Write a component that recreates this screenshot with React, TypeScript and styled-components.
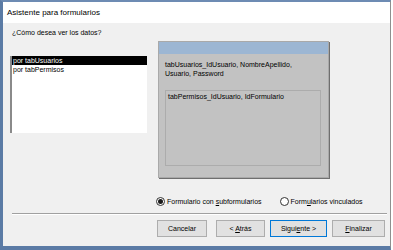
import styled, { createGlobalStyle } from "styled-components";

const GlobalStyle = createGlobalStyle`
  html, body {
    margin: 0;
    padding: 0;
    background: #ffffff;
  }
  body {
    font-family: "Liberation Sans", Arial, sans-serif;
    color: #000000;
  }
`;

const Window = styled.div`
  width: 391px;
  height: 250px;
  box-sizing: border-box;
  display: flex;
  flex-direction: column;
  border-top: 2px solid #6d8bb3;
  border-left: 3px solid #5b7ba5;
  border-bottom: 4px solid #5b7ba5;
  border-right: 1px solid #8f8f8f;
`;

const TitleBar = styled.div`
  height: 21px;
  display: flex;
  align-items: center;
  padding-left: 4px;
  background: #ffffff;
  font-size: 8px;
`;

const Body = styled.div`
  flex: 1;
  display: flex;
  flex-direction: column;
  background: #f0f0f0;
  padding: 0 2px 0 7px;
  font-size: 7px;
`;

const TopRow = styled.div`
  display: flex;
  align-items: flex-start;
`;

const LeftCol = styled.div`
  width: 137px;
  display: flex;
  flex-direction: column;
`;

const Question = styled.div`
  padding: 5px 0 0 2px;
  line-height: 10px;
`;

const ListBox = styled.div`
  margin-top: 18px;
  height: 77px;
  box-sizing: border-box;
  background: #ffffff;
  border-left: 2px solid #8a8a8a;
  display: flex;
  flex-direction: column;
`;

const ListItem = styled.div<{ $selected?: boolean }>`
  height: 9px;
  line-height: 9px;
  padding-left: 1px;
  background: ${(p) => (p.$selected ? "#000000" : "transparent")};
  color: ${(p) => (p.$selected ? "#ffffff" : "#000000")};
`;

const Panel = styled.div`
  margin: 18px 0 0 11px;
  width: 171px;
  height: 137px;
  box-sizing: border-box;
  background: #c2c2c2;
  border: 1px solid #a9a9a9;
  box-shadow: 1px 1px 0 #6f6f6f;
  display: flex;
  flex-direction: column;
`;

const PanelHeader = styled.div`
  height: 12px;
  background: #9cb6d3;
`;

const PanelText = styled.div`
  padding: 6px 0 0 6px;
  line-height: 9px;
  width: 150px;
`;

const SubBox = styled.div`
  margin: 12px 0 0 6px;
  width: 156px;
  height: 76px;
  box-sizing: border-box;
  border: 1px solid #acacac;
  padding: 1px 0 0 2px;
  line-height: 9px;
`;

const RadioRow = styled.div`
  display: flex;
  align-items: center;
  margin-top: 18px;
  padding-left: 146px;
  height: 10px;
`;

const RadioOption = styled.label<{ $gap?: number }>`
  display: flex;
  align-items: center;
  gap: 2px;
  margin-left: ${(p) => p.$gap ?? 0}px;
`;

const RadioCircle = styled.span<{ $checked?: boolean }>`
  width: 9px;
  height: 9px;
  box-sizing: border-box;
  border-radius: 50%;
  border: 1px solid #333333;
  background: #ffffff;
  display: flex;
  align-items: center;
  justify-content: center;

  &::after {
    content: "";
    width: 5px;
    height: 5px;
    border-radius: 50%;
    background: ${(p) => (p.$checked ? "#1a1a1a" : "transparent")};
  }
`;

const Separator = styled.div`
  margin: 7px 0 0 2px;
  width: 375px;
  height: 1px;
  background: #a0a0a0;
  box-shadow: 0 1px 0 #ffffff;
`;

const ButtonRow = styled.div`
  display: flex;
  margin: 6px 0 0 147px;
`;

const Button = styled.div<{ $w: number; $gap?: number; $focused?: boolean }>`
  width: ${(p) => p.$w}px;
  height: 17px;
  box-sizing: border-box;
  margin-left: ${(p) => p.$gap ?? 0}px;
  background: #e1e1e1;
  border: 1px solid ${(p) => (p.$focused ? "#0078d7" : "#adadad")};
  display: flex;
  align-items: center;
  justify-content: center;
`;

const Key = styled.span`
  text-decoration: underline;
`;

export default function App() {
  return (
    <>
      <GlobalStyle />
      <Window>
        <TitleBar>Asistente para formularios</TitleBar>
        <Body>
          <TopRow>
            <LeftCol>
              <Question>¿Cómo desea ver los datos?</Question>
              <ListBox>
                <ListItem $selected>por tabUsuarios</ListItem>
                <ListItem>por tabPermisos</ListItem>
              </ListBox>
            </LeftCol>
            <Panel>
              <PanelHeader />
              <PanelText>
                tabUsuarios_IdUsuario, NombreApellido, Usuario, Password
              </PanelText>
              <SubBox>tabPermisos_IdUsuario, IdFormulario</SubBox>
            </Panel>
          </TopRow>
          <RadioRow>
            <RadioOption>
              <RadioCircle $checked />
              <span>
                Formulario con <Key>s</Key>ubformularios
              </span>
            </RadioOption>
            <RadioOption $gap={18}>
              <RadioCircle />
              <span>
                Form<Key>u</Key>larios vinculados
              </span>
            </RadioOption>
          </RadioRow>
          <Separator />
          <ButtonRow>
            <Button $w={50}>Cancelar</Button>
            <Button $w={49} $gap={9}>
              <span>
                &lt; <Key>A</Key>trás
              </span>
            </Button>
            <Button $w={57} $gap={5} $focused>
              <span>
                Sigui<Key>e</Key>nte &gt;
              </span>
            </Button>
            <Button $w={53} $gap={5}>
              <span>
                <Key>F</Key>inalizar
              </span>
            </Button>
          </ButtonRow>
        </Body>
      </Window>
    </>
  );
}
